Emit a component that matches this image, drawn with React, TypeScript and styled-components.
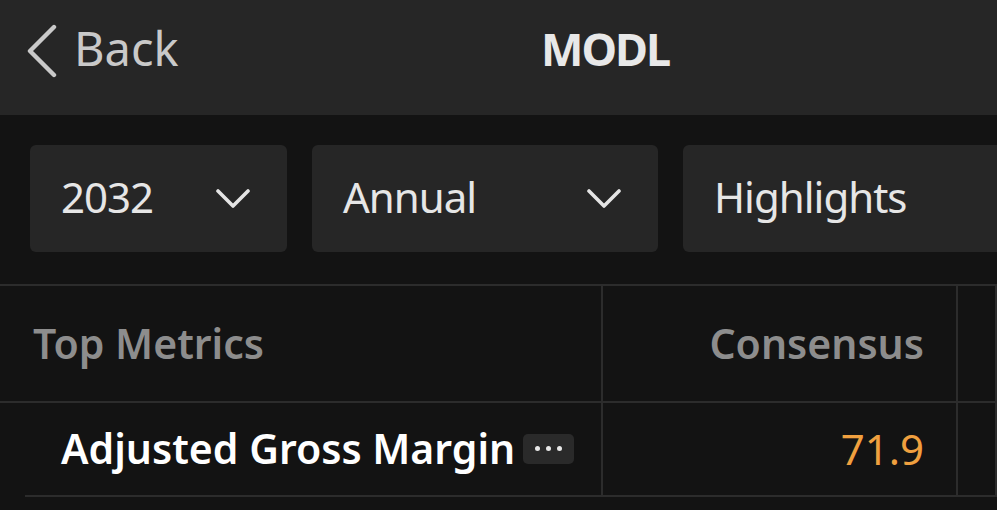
import React from "react";
import styled, { createGlobalStyle } from "styled-components";

const Global = createGlobalStyle`
  html, body { margin: 0; padding: 0; background: #131313; overflow: hidden; }
  body { font-family: "Noto Sans", "Open Sans", sans-serif; -webkit-font-smoothing: antialiased; }
  * { box-sizing: border-box; }
`;

const Page = styled.div`
  width: 997px;
  height: 510px;
  background: #131313;
  overflow: hidden;
  display: flex;
  flex-direction: column;
`;

const Header = styled.header`
  height: 115px;
  flex: none;
  background: #262626;
  display: grid;
  grid-template-columns: 514px auto 1fr;
  align-items: center;
  padding: 0 27px 14px 27px;
`;

const BackButton = styled.div`
  display: flex;
  align-items: center;
  gap: 17px;
  color: #c9c9c9;
  font-size: 47px;
  font-weight: 400;
  line-height: 1;
`;

const BackLabel = styled.span`
  margin-top: -4px;
`;

const Title = styled.h1`
  margin: -4px 0 0 0;
  color: #e8e8e8;
  font-size: 45px;
  font-weight: 700;
  letter-spacing: -2px;
  line-height: 1;
`;

const FilterBar = styled.div`
  display: flex;
  gap: 25px;
  padding: 30px 0 32px 30px;
  flex: none;
`;

const Dropdown = styled.div<{ $w: number }>`
  flex: none;
  width: ${(p) => p.$w}px;
  height: 107px;
  background: #262626;
  border-radius: 6px;
  display: flex;
  align-items: center;
  justify-content: space-between;
  padding: 0 37px 0 31px;
  color: #e6e6e6;
  font-size: 42px;
  font-weight: 400;
  letter-spacing: -1px;
`;

const DropLabel = styled.span`
  margin-top: -5px;
`;

const Table = styled.div`
  display: flex;
  flex-direction: column;
  border-top: 2px solid #2c2c2c;
`;

const Row = styled.div<{ $h: number }>`
  display: grid;
  grid-template-columns: 603px 355px 1fr;
  height: ${(p) => p.$h}px;
`;

const Cell = styled.div<{ $indent?: boolean; $right?: boolean }>`
  display: flex;
  align-items: center;
  justify-content: ${(p) => (p.$right ? "flex-end" : "flex-start")};
  border-right: 2px solid #2c2c2c;
  border-bottom: 2px solid #2c2c2c;
  margin-left: ${(p) => (p.$indent ? "25px" : "0")};
  padding-left: ${(p) => (p.$indent ? "36px" : "33px")};
  padding-right: ${(p) => (p.$right ? "32px" : "0")};
`;

const HeadText = styled.span`
  color: #8d8d8d;
  font-size: 41px;
  font-weight: 600;
  margin-top: -2px;
`;

const MetricName = styled.span`
  color: #ffffff;
  font-size: 41px;
  font-weight: 600;
  margin-top: -2px;
`;

const Value = styled.span`
  color: #f0a03f;
  font-size: 42px;
  font-weight: 400;
  margin-top: -2px;
`;

const MoreBadge = styled.span`
  display: inline-flex;
  align-items: center;
  justify-content: center;
  gap: 6px;
  width: 51px;
  height: 30px;
  border-radius: 5px;
  background: #2a2a2a;
  margin-left: 8px;
  margin-top: -1px;
`;

const Dot = styled.span`
  width: 5px;
  height: 5px;
  border-radius: 50%;
  background: #e8e8e8;
`;

const Chevron = () => (
  <svg width="34" height="20" viewBox="0 0 34 20" fill="none">
    <polyline points="2,2 17,17 32,2" stroke="#e4e4e4" strokeWidth="3.6" strokeLinecap="round" strokeLinejoin="round" />
  </svg>
);

const BackChevron = () => (
  <svg width="30" height="54" viewBox="0 0 30 54" fill="none">
    <polyline points="27,3 3,27 27,51" stroke="#c9c9c9" strokeWidth="4.4" strokeLinecap="round" strokeLinejoin="round" />
  </svg>
);

export default function App() {
  return (
    <Page>
      <Global />
      <Header>
        <BackButton>
          <BackChevron />
          <BackLabel>Back</BackLabel>
        </BackButton>
        <Title>MODL</Title>
        <span />
      </Header>
      <FilterBar>
        <Dropdown $w={257}>
          <DropLabel>2032</DropLabel>
          <Chevron />
        </Dropdown>
        <Dropdown $w={346}>
          <DropLabel>Annual</DropLabel>
          <Chevron />
        </Dropdown>
        <Dropdown $w={340}>
          <DropLabel>Highlights</DropLabel>
        </Dropdown>
      </FilterBar>
      <Table>
        <Row $h={117}>
          <Cell>
            <HeadText>Top Metrics</HeadText>
          </Cell>
          <Cell $right>
            <HeadText>Consensus</HeadText>
          </Cell>
          <Cell />
        </Row>
        <Row $h={94}>
          <Cell $indent>
            <MetricName>Adjusted Gross Margin</MetricName>
            <MoreBadge>
              <Dot />
              <Dot />
              <Dot />
            </MoreBadge>
          </Cell>
          <Cell $right>
            <Value>71.9</Value>
          </Cell>
          <Cell />
        </Row>
      </Table>
    </Page>
  );
}
